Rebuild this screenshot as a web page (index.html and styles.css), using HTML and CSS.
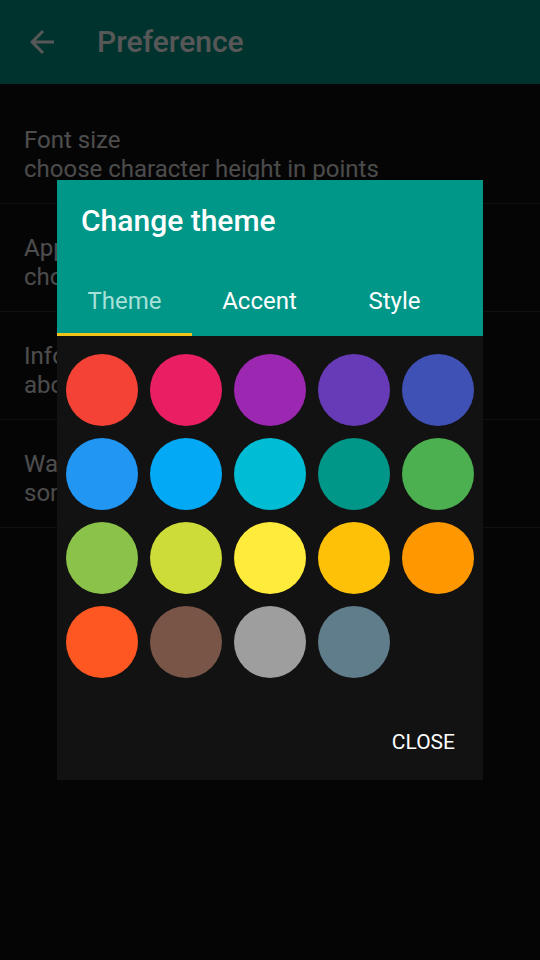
FILE: index.html
```html
<!DOCTYPE html>
<html>
<head>
<meta charset="utf-8">
<link rel="stylesheet" href="styles.css">
</head>
<body>
<div class="app">
  <header class="toolbar">
    <svg class="back" viewBox="0 0 24 24" width="36" height="36"><path d="M20 11H7.83l5.59-5.59L12 4l-8 8 8 8 1.41-1.41L7.83 13H20v-2z" fill="#ffffff"/></svg>
    <div class="toolbar-title">Preference</div>
  </header>
  <div class="list">
    <div class="item"><div class="item-title">Font size</div><div class="item-sub">choose character height in points</div></div>
    <div class="item"><div class="item-title">Appearance</div><div class="item-sub">choose theme, accent and style</div></div>
    <div class="item"><div class="item-title">Information</div><div class="item-sub">about this application</div></div>
    <div class="item"><div class="item-title">Warning</div><div class="item-sub">some settings require restart</div></div>
  </div>
  <div class="scrim"></div>
  <div class="dialog">
    <div class="dialog-head">
      <div class="dialog-title">Change theme</div>
      <div class="tabs">
        <div class="tab active">Theme</div>
        <div class="tab">Accent</div>
        <div class="tab">Style</div>
      </div>
    </div>
    <div class="grid">
      <div class="cell"><span class="dot c-red"></span></div>
      <div class="cell"><span class="dot c-pink"></span></div>
      <div class="cell"><span class="dot c-purple"></span></div>
      <div class="cell"><span class="dot c-dpurple"></span></div>
      <div class="cell"><span class="dot c-indigo"></span></div>
      <div class="cell"><span class="dot c-blue"></span></div>
      <div class="cell"><span class="dot c-lblue"></span></div>
      <div class="cell"><span class="dot c-cyan"></span></div>
      <div class="cell"><span class="dot c-teal"></span></div>
      <div class="cell"><span class="dot c-green"></span></div>
      <div class="cell"><span class="dot c-lgreen"></span></div>
      <div class="cell"><span class="dot c-lime"></span></div>
      <div class="cell"><span class="dot c-yellow"></span></div>
      <div class="cell"><span class="dot c-amber"></span></div>
      <div class="cell"><span class="dot c-orange"></span></div>
      <div class="cell"><span class="dot c-dorange"></span></div>
      <div class="cell"><span class="dot c-brown"></span></div>
      <div class="cell"><span class="dot c-grey"></span></div>
      <div class="cell"><span class="dot c-bgrey"></span></div>
    </div>
    <div class="actions"><span class="btn">CLOSE</span></div>
  </div>
</div>
</body>
</html>
```
FILE: styles.css
```css
html, body {
  margin: 0;
  padding: 0;
  background: #0b0b0b;
}
body {
  font-family: Roboto, "Noto Sans", sans-serif;
}
.app {
  position: relative;
  width: 540px;
  height: 960px;
  overflow: hidden;
  background: #101010;
}
.toolbar {
  height: 84px;
  background: #009688;
  display: flex;
  align-items: center;
  padding-left: 24px;
  box-sizing: border-box;
}
.back {
  display: block;
  flex: none;
}
.toolbar-title {
  margin-left: 37px;
  color: #ffffff;
  font-size: 30px;
  font-weight: 500;
  line-height: 36px;
}
.list {
  padding-top: 12px;
}
.item {
  height: 108px;
  box-sizing: border-box;
  padding: 30px 24px 0;
  border-bottom: 1px solid #303030;
}
.item-title {
  color: #e0e0e0;
  font-size: 24px;
  line-height: 29px;
}
.item-sub {
  color: #dcdcdc;
  font-size: 24px;
  line-height: 29px;
}
.scrim {
  position: absolute;
  inset: 0;
  background: rgba(0, 0, 0, 0.66);
}
.dialog {
  position: absolute;
  left: 57px;
  top: 180px;
  width: 426px;
  height: 600px;
  background: #121212;
  display: flex;
  flex-direction: column;
}
.dialog-head {
  background: #009688;
  height: 156px;
  display: flex;
  flex-direction: column;
}
.dialog-title {
  color: #ffffff;
  font-size: 30px;
  font-weight: 500;
  padding: 23px 24px 0;
  line-height: 36px;
}
.tabs {
  margin-top: auto;
  display: flex;
}
.tab {
  width: 135px;
  height: 72px;
  box-sizing: border-box;
  display: flex;
  align-items: center;
  justify-content: center;
  padding-top: 5px;
  color: #ffffff;
  font-size: 24px;
  border-bottom: 3px solid transparent;
}
.tab.active {
  color: #a6e0d8;
  border-bottom-color: #f2c31a;
}
.grid {
  display: grid;
  grid-template-columns: repeat(5, 84px);
  grid-auto-rows: 84px;
  padding: 12px 3px 0;
}
.cell {
  display: flex;
  align-items: center;
  justify-content: center;
}
.dot {
  width: 72px;
  height: 72px;
  border-radius: 50%;
  display: block;
}
.c-red { background: #f44336; }
.c-pink { background: #e91e63; }
.c-purple { background: #9c27b0; }
.c-dpurple { background: #673ab7; }
.c-indigo { background: #3f51b5; }
.c-blue { background: #2196f3; }
.c-lblue { background: #03a9f4; }
.c-cyan { background: #00bcd4; }
.c-teal { background: #009688; }
.c-green { background: #4caf50; }
.c-lgreen { background: #8bc34a; }
.c-lime { background: #cddc39; }
.c-yellow { background: #ffeb3b; }
.c-amber { background: #ffc107; }
.c-orange { background: #ff9800; }
.c-dorange { background: #ff5722; }
.c-brown { background: #795548; }
.c-grey { background: #9e9e9e; }
.c-bgrey { background: #607d8b; }
.actions {
  margin-top: auto;
  display: flex;
  justify-content: flex-end;
  padding: 0 28px 24px 0;
}
.btn {
  color: #ffffff;
  font-size: 21px;
  line-height: 28px;
}
```
